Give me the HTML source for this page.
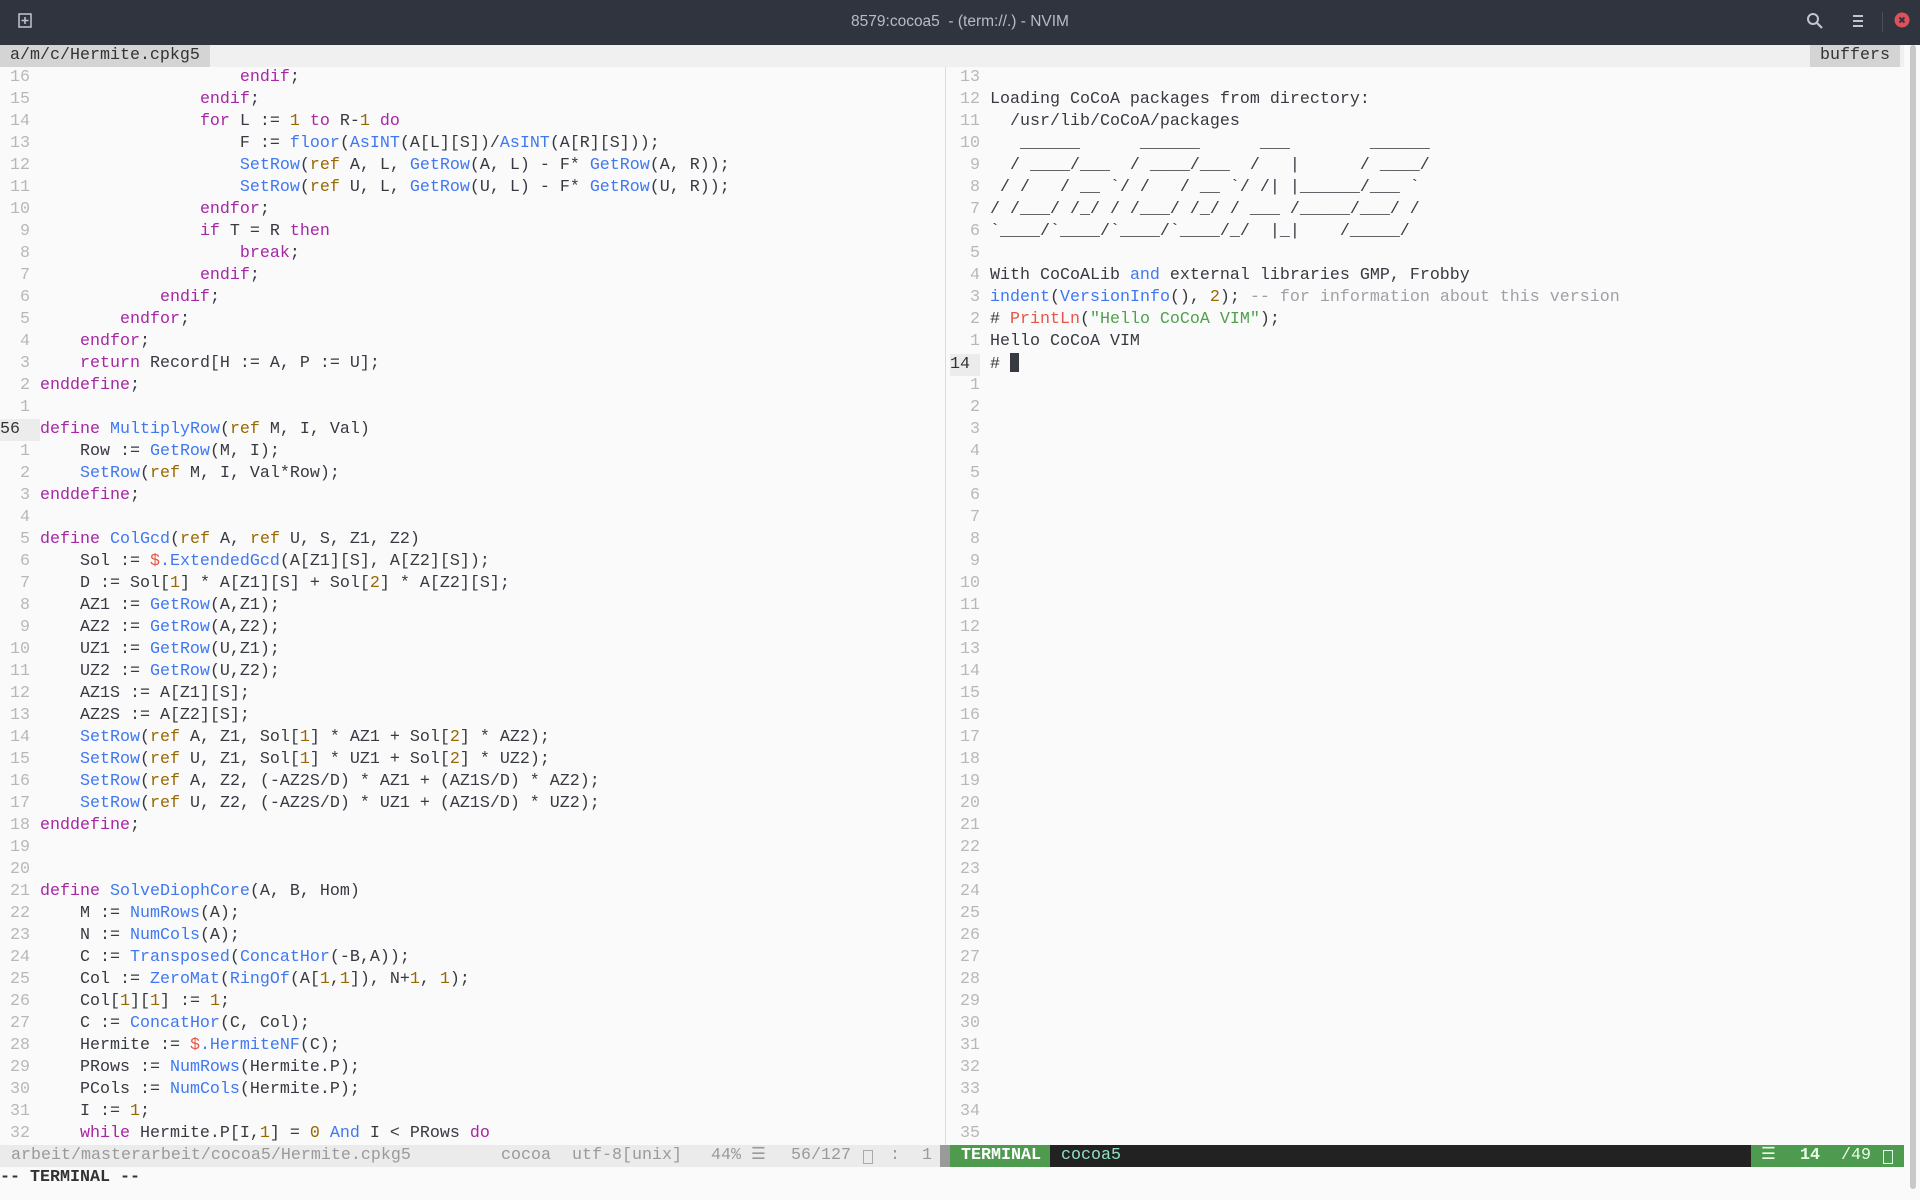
<!DOCTYPE html>
<html><head><meta charset="utf-8"><style>
*{margin:0;padding:0;box-sizing:border-box}
body{width:1920px;height:1200px;background:#fafafa;overflow:hidden;position:relative;font-family:"Liberation Mono","DejaVu Sans Mono",monospace;font-size:16.67px;color:#383a42}
.title{position:absolute;left:0;top:0;width:1920px;height:45px;background:#2f343f;color:#b8bcc4;font-family:"Liberation Sans",sans-serif;font-size:15.5px;text-align:center;line-height:43px}
.tabs{position:absolute;left:0;top:45px;width:1904px;height:22px;background:#f0f0f0;line-height:22px}
.tab{position:absolute;top:0;height:22px;background:#d4d4d4;padding:0 10px;color:#333}
.pane{position:absolute;top:67px;line-height:22px}
.row{height:22px;white-space:pre}
.ln{display:inline-block;width:40px;color:#b8b8b8;text-align:left}
.k{color:#a626a4}.f{color:#4078f2}.n{color:#986801}.r{color:#e45649}.s{color:#50a14f}.c{color:#a0a1a7}
.cur{background:#ececec;color:#333}
.st{position:absolute;top:1145px;height:22px;line-height:22px;white-space:pre}
.bx{position:absolute;top:5px;width:10px;height:14px;border:1px solid #aaa}
</style></head><body>
<div class="title">8579:cocoa5 &nbsp;- (term://.) - NVIM</div>
<svg style="position:absolute;left:18px;top:13px" width="14" height="16" viewBox="0 0 14 16"><rect x="1" y="1" width="12" height="13" fill="none" stroke="#c0c5ce" stroke-width="1.5"/><path d="M7 4v7M3.5 7.5h7" stroke="#c0c5ce" stroke-width="1.5"/></svg>
<svg style="position:absolute;left:1806px;top:12px" width="18" height="18" viewBox="0 0 18 18"><circle cx="7" cy="7" r="5" fill="none" stroke="#c0c5ce" stroke-width="2"/><path d="M11 11l5 5" stroke="#c0c5ce" stroke-width="2.2"/></svg>
<svg style="position:absolute;left:1852px;top:14px" width="12" height="14" viewBox="0 0 12 14"><path d="M1 2h10M1 7h10M1 12h10" stroke="#c0c5ce" stroke-width="2"/></svg>
<div style="position:absolute;left:1882px;top:12px;width:1px;height:20px;background:#4a4f5a"></div>
<svg style="position:absolute;left:1894px;top:12px" width="16" height="16" viewBox="0 0 16 16"><circle cx="8" cy="8" r="7.5" fill="#e0505a"/><path d="M5.5 5.5l5 5M10.5 5.5l-5 5" stroke="#2f343f" stroke-width="2"/></svg>
<div class="tabs"><div class="tab" style="left:0">a/m/c/Hermite.cpkg5</div><div class="tab" style="left:1810px;width:90px">buffers</div></div>
<div style="position:absolute;left:1910px;top:45px;width:6px;height:1144px;background:#c8c8c8;border-radius:3px"></div>
<div style="position:absolute;left:945px;top:67px;width:1px;height:1078px;background:#dcdcdc"></div>

<div class="pane" style="left:0;width:945px"><div class="row"><span class="ln"> 16 </span>                    <span class="k">endif</span>;</div><div class="row"><span class="ln"> 15 </span>                <span class="k">endif</span>;</div><div class="row"><span class="ln"> 14 </span>                <span class="k">for</span> L := <span class="n">1</span> <span class="k">to</span> R-<span class="n">1</span> <span class="k">do</span></div><div class="row"><span class="ln"> 13 </span>                    F := <span class="f">floor</span>(<span class="f">AsINT</span>(A[L][S])/<span class="f">AsINT</span>(A[R][S]));</div><div class="row"><span class="ln"> 12 </span>                    <span class="f">SetRow</span>(<span class="n">ref</span> A, L, <span class="f">GetRow</span>(A, L) - F* <span class="f">GetRow</span>(A, R));</div><div class="row"><span class="ln"> 11 </span>                    <span class="f">SetRow</span>(<span class="n">ref</span> U, L, <span class="f">GetRow</span>(U, L) - F* <span class="f">GetRow</span>(U, R));</div><div class="row"><span class="ln"> 10 </span>                <span class="k">endfor</span>;</div><div class="row"><span class="ln">  9 </span>                <span class="k">if</span> T = R <span class="k">then</span></div><div class="row"><span class="ln">  8 </span>                    <span class="k">break</span>;</div><div class="row"><span class="ln">  7 </span>                <span class="k">endif</span>;</div><div class="row"><span class="ln">  6 </span>            <span class="k">endif</span>;</div><div class="row"><span class="ln">  5 </span>        <span class="k">endfor</span>;</div><div class="row"><span class="ln">  4 </span>    <span class="k">endfor</span>;</div><div class="row"><span class="ln">  3 </span>    <span class="k">return</span> Record[H := A, P := U];</div><div class="row"><span class="ln">  2 </span><span class="k">enddefine</span>;</div><div class="row"><span class="ln">  1 </span></div><div class="row"><span class="ln cur">56  </span><span class="k">define</span> <span class="f">MultiplyRow</span>(<span class="n">ref</span> M, I, Val)</div><div class="row"><span class="ln">  1 </span>    Row := <span class="f">GetRow</span>(M, I);</div><div class="row"><span class="ln">  2 </span>    <span class="f">SetRow</span>(<span class="n">ref</span> M, I, Val*Row);</div><div class="row"><span class="ln">  3 </span><span class="k">enddefine</span>;</div><div class="row"><span class="ln">  4 </span></div><div class="row"><span class="ln">  5 </span><span class="k">define</span> <span class="f">ColGcd</span>(<span class="n">ref</span> A, <span class="n">ref</span> U, S, Z1, Z2)</div><div class="row"><span class="ln">  6 </span>    Sol := <span class="r">$</span><span class="f">.ExtendedGcd</span>(A[Z1][S], A[Z2][S]);</div><div class="row"><span class="ln">  7 </span>    D := Sol[<span class="n">1</span>] * A[Z1][S] + Sol[<span class="n">2</span>] * A[Z2][S];</div><div class="row"><span class="ln">  8 </span>    AZ1 := <span class="f">GetRow</span>(A,Z1);</div><div class="row"><span class="ln">  9 </span>    AZ2 := <span class="f">GetRow</span>(A,Z2);</div><div class="row"><span class="ln"> 10 </span>    UZ1 := <span class="f">GetRow</span>(U,Z1);</div><div class="row"><span class="ln"> 11 </span>    UZ2 := <span class="f">GetRow</span>(U,Z2);</div><div class="row"><span class="ln"> 12 </span>    AZ1S := A[Z1][S];</div><div class="row"><span class="ln"> 13 </span>    AZ2S := A[Z2][S];</div><div class="row"><span class="ln"> 14 </span>    <span class="f">SetRow</span>(<span class="n">ref</span> A, Z1, Sol[<span class="n">1</span>] * AZ1 + Sol[<span class="n">2</span>] * AZ2);</div><div class="row"><span class="ln"> 15 </span>    <span class="f">SetRow</span>(<span class="n">ref</span> U, Z1, Sol[<span class="n">1</span>] * UZ1 + Sol[<span class="n">2</span>] * UZ2);</div><div class="row"><span class="ln"> 16 </span>    <span class="f">SetRow</span>(<span class="n">ref</span> A, Z2, (-AZ2S/D) * AZ1 + (AZ1S/D) * AZ2);</div><div class="row"><span class="ln"> 17 </span>    <span class="f">SetRow</span>(<span class="n">ref</span> U, Z2, (-AZ2S/D) * UZ1 + (AZ1S/D) * UZ2);</div><div class="row"><span class="ln"> 18 </span><span class="k">enddefine</span>;</div><div class="row"><span class="ln"> 19 </span></div><div class="row"><span class="ln"> 20 </span></div><div class="row"><span class="ln"> 21 </span><span class="k">define</span> <span class="f">SolveDiophCore</span>(A, B, Hom)</div><div class="row"><span class="ln"> 22 </span>    M := <span class="f">NumRows</span>(A);</div><div class="row"><span class="ln"> 23 </span>    N := <span class="f">NumCols</span>(A);</div><div class="row"><span class="ln"> 24 </span>    C := <span class="f">Transposed</span>(<span class="f">ConcatHor</span>(-B,A));</div><div class="row"><span class="ln"> 25 </span>    Col := <span class="f">ZeroMat</span>(<span class="f">RingOf</span>(A[<span class="n">1</span>,<span class="n">1</span>]), N+<span class="n">1</span>, <span class="n">1</span>);</div><div class="row"><span class="ln"> 26 </span>    Col[<span class="n">1</span>][<span class="n">1</span>] := <span class="n">1</span>;</div><div class="row"><span class="ln"> 27 </span>    C := <span class="f">ConcatHor</span>(C, Col);</div><div class="row"><span class="ln"> 28 </span>    Hermite := <span class="r">$</span><span class="f">.HermiteNF</span>(C);</div><div class="row"><span class="ln"> 29 </span>    PRows := <span class="f">NumRows</span>(Hermite.P);</div><div class="row"><span class="ln"> 30 </span>    PCols := <span class="f">NumCols</span>(Hermite.P);</div><div class="row"><span class="ln"> 31 </span>    I := <span class="n">1</span>;</div><div class="row"><span class="ln"> 32 </span>    <span class="k">while</span> Hermite.P[I,<span class="n">1</span>] = <span class="n">0</span> <span class="f">And</span> I &lt; PRows <span class="k">do</span></div></div>

<div class="pane" style="left:950px;width:954px"><div class="row"><span class="ln"> 13 </span></div><div class="row"><span class="ln"> 12 </span>Loading CoCoA packages from directory:</div><div class="row"><span class="ln"> 11 </span>  /usr/lib/CoCoA/packages</div><div class="row"><span class="ln"> 10 </span>   ______      ______      ___        ______</div><div class="row"><span class="ln">  9 </span>  / ____/___  / ____/___  /   |      / ____/</div><div class="row"><span class="ln">  8 </span> / /   / __ `/ /   / __ `/ /| |______/___ `</div><div class="row"><span class="ln">  7 </span>/ /___/ /_/ / /___/ /_/ / ___ /_____/___/ /</div><div class="row"><span class="ln">  6 </span>`____/`____/`____/`____/_/  |_|    /_____/</div><div class="row"><span class="ln">  5 </span></div><div class="row"><span class="ln">  4 </span>With CoCoALib <span class="f">and</span> external libraries GMP, Frobby</div><div class="row"><span class="ln">  3 </span><span class="f">indent</span>(<span class="f">VersionInfo</span>(), <span class="n">2</span>); <span class="c">-- for information about this version</span></div><div class="row"><span class="ln">  2 </span># <span class="r">PrintLn</span>(<span class="s">"Hello CoCoA VIM"</span>);</div><div class="row"><span class="ln">  1 </span>Hello CoCoA VIM</div><div class="row"><span class="ln cur" style="width:30px">14 </span><span style="display:inline-block;width:10px"></span># <span style="display:inline-block;width:9px;height:19px;background:#383a42;vertical-align:-4px"></span></div><div class="row"><span class="ln">  1 </span></div><div class="row"><span class="ln">  2 </span></div><div class="row"><span class="ln">  3 </span></div><div class="row"><span class="ln">  4 </span></div><div class="row"><span class="ln">  5 </span></div><div class="row"><span class="ln">  6 </span></div><div class="row"><span class="ln">  7 </span></div><div class="row"><span class="ln">  8 </span></div><div class="row"><span class="ln">  9 </span></div><div class="row"><span class="ln"> 10 </span></div><div class="row"><span class="ln"> 11 </span></div><div class="row"><span class="ln"> 12 </span></div><div class="row"><span class="ln"> 13 </span></div><div class="row"><span class="ln"> 14 </span></div><div class="row"><span class="ln"> 15 </span></div><div class="row"><span class="ln"> 16 </span></div><div class="row"><span class="ln"> 17 </span></div><div class="row"><span class="ln"> 18 </span></div><div class="row"><span class="ln"> 19 </span></div><div class="row"><span class="ln"> 20 </span></div><div class="row"><span class="ln"> 21 </span></div><div class="row"><span class="ln"> 22 </span></div><div class="row"><span class="ln"> 23 </span></div><div class="row"><span class="ln"> 24 </span></div><div class="row"><span class="ln"> 25 </span></div><div class="row"><span class="ln"> 26 </span></div><div class="row"><span class="ln"> 27 </span></div><div class="row"><span class="ln"> 28 </span></div><div class="row"><span class="ln"> 29 </span></div><div class="row"><span class="ln"> 30 </span></div><div class="row"><span class="ln"> 31 </span></div><div class="row"><span class="ln"> 32 </span></div><div class="row"><span class="ln"> 33 </span></div><div class="row"><span class="ln"> 34 </span></div><div class="row"><span class="ln"> 35 </span></div></div>

<div class="st" style="left:0;width:940px;background:#ebebeb;color:#9a9a9a"><span style="position:absolute;left:11px">arbeit/masterarbeit/cocoa5/Hermite.cpkg5</span><span style="position:absolute;left:501px">cocoa</span><span style="position:absolute;left:572px">utf-8[unix]</span><span style="position:absolute;left:711px">44% ☰</span><span style="position:absolute;left:791px">56/127</span><span class="bx" style="left:863px"></span><span style="position:absolute;left:890px">:</span><span style="position:absolute;left:922px">1</span></div>
<div class="st" style="left:940px;width:10px;background:#9a9a9a"></div>
<div class="st" style="left:950px;width:100px;background:#4e9a4e;color:#fff;font-weight:bold;padding-left:11px">TERMINAL</div>
<div class="st" style="left:1050px;width:701px;background:#222;color:#8fe0c0;padding-left:11px">cocoa5</div>
<div class="st" style="left:1751px;width:153px;background:#4e9a4e;color:#e8ffe8"><span style="position:absolute;left:10px">☰</span><span style="position:absolute;left:49px;font-weight:bold">14</span><span style="position:absolute;left:90px">/49</span><span class="bx" style="left:132px;border-color:#dfe"></span></div>
<div style="position:absolute;left:0;top:1167px;height:22px;line-height:22px;font-weight:bold;color:#333;white-space:pre">-- TERMINAL --</div>
</body></html>
